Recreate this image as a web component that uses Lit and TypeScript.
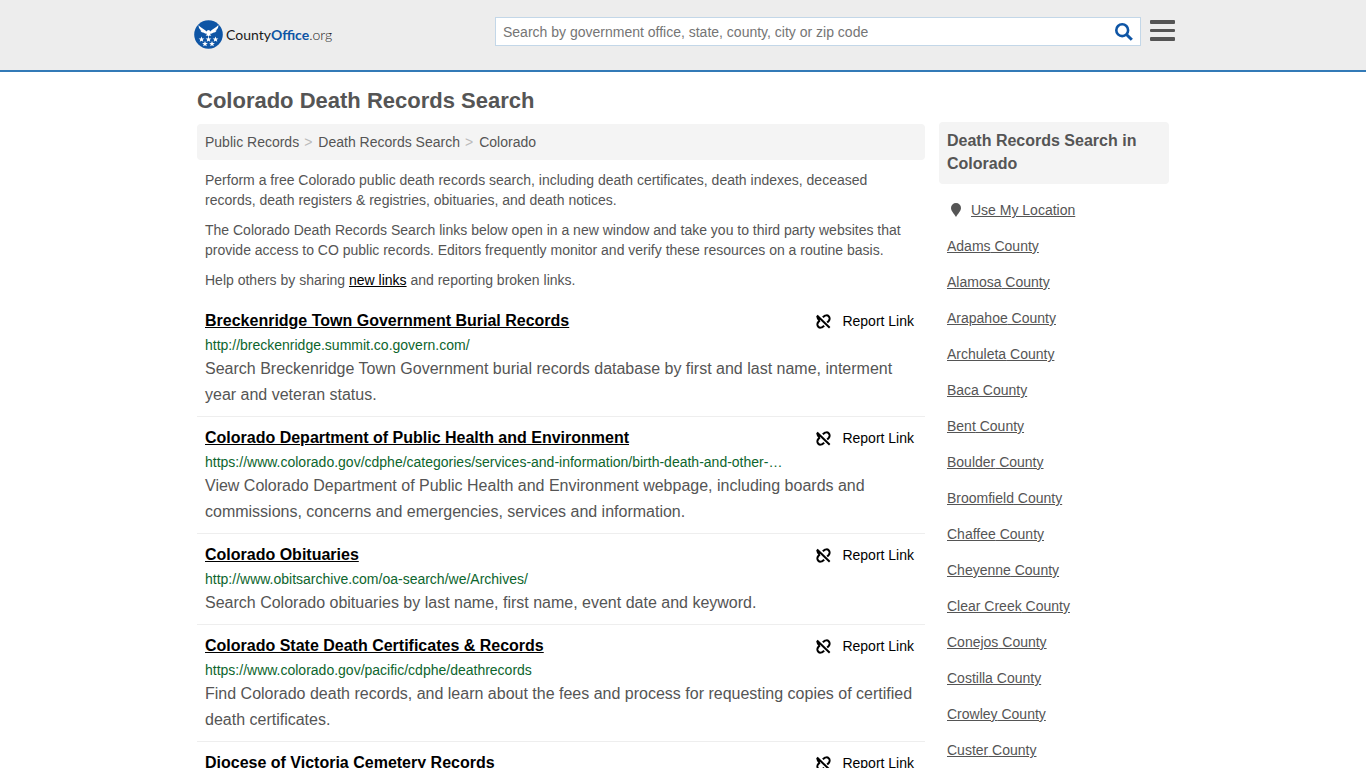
import { LitElement, html, css, svg } from "lit";
import { customElement } from "lit/decorators.js";

interface RecordLink {
  title: string;
  url?: string;
  description?: string;
}

const RECORDS: RecordLink[] = [
  {
    title: "Breckenridge Town Government Burial Records",
    url: "http://breckenridge.summit.co.govern.com/",
    description:
      "Search Breckenridge Town Government burial records database by first and last name, interment year and veteran status.",
  },
  {
    title: "Colorado Department of Public Health and Environment",
    url: "https://www.colorado.gov/cdphe/categories/services-and-information/birth-death-and-other-…",
    description:
      "View Colorado Department of Public Health and Environment webpage, including boards and commissions, concerns and emergencies, services and information.",
  },
  {
    title: "Colorado Obituaries",
    url: "http://www.obitsarchive.com/oa-search/we/Archives/",
    description: "Search Colorado obituaries by last name, first name, event date and keyword.",
  },
  {
    title: "Colorado State Death Certificates & Records",
    url: "https://www.colorado.gov/pacific/cdphe/deathrecords",
    description:
      "Find Colorado death records, and learn about the fees and process for requesting copies of certified death certificates.",
  },
  { title: "Diocese of Victoria Cemetery Records" },
];

const COUNTIES = [
  "Adams", "Alamosa", "Arapahoe", "Archuleta", "Baca", "Bent", "Boulder", "Broomfield",
  "Chaffee", "Cheyenne", "Clear Creek", "Conejos", "Costilla", "Crowley", "Custer",
];

const STARS = [[7.5, 19.3], [14.5, 19.3], [21.5, 19.3], [11, 23.8], [18, 23.8]];

@customElement("app-root")
export class AppRoot extends LitElement {
  static styles = css`
    :host {
      display: block;
      font: 14px/20px "Liberation Sans", Arial, sans-serif;
      color: #555;
      background: #fff;
    }
    * { box-sizing: border-box; }
    h1, h2, h3, p, ul { margin: 0; padding: 0; }
    ul { list-style: none; }
    a { color: inherit; }
    svg { display: block; flex: none; }
    .header {
      background: #ededed;
      border-bottom: 2px solid #337ab7;
    }
    .bar {
      max-width: 984px;
      height: 70px;
      margin: 0 auto;
      padding: 17px 0 0 3px;
      display: flex;
      align-items: flex-start;
      justify-content: space-between;
    }
    .logo {
      display: flex;
      align-items: center;
      gap: 3px;
      height: 35px;
      color: #1a1a1a;
      font: 14px/20px Lato, sans-serif;
      text-decoration: none;
    }
    .brand { color: #0e55a5; font-weight: 700; }
    .tld { font-weight: 300; }
    .tools { display: flex; gap: 9px; }
    .search {
      display: flex;
      align-items: center;
      width: 646px;
      height: 29px;
      background: #fff;
      border: 1px solid #c3d7e8;
      padding: 0 7px;
    }
    .query {
      flex: 1;
      min-width: 0;
      height: 27px;
      border: 0;
      padding: 0;
      outline: 0;
      background: none;
      font: inherit;
      color: #555;
    }
    .query::placeholder { color: #757575; opacity: 1; }
    .icon-button {
      border: 0;
      background: none;
      padding: 0;
      cursor: pointer;
      color: #555;
    }
    .search .icon-button { color: #0e55a5; }
    .page {
      max-width: 972px;
      margin: 0 auto;
      padding-top: 14px;
    }
    .title { font-size: 22px; line-height: 30px; }
    .columns {
      display: grid;
      grid-template-columns: minmax(0, 1fr) 230px;
      gap: 14px;
      align-items: start;
      padding-top: 6px;
    }
    .crumbs {
      display: flex;
      gap: 5px;
      margin-top: 2px;
      padding: 8px;
      background: #f4f4f4;
      border-radius: 4px;
    }
    .crumbs a { text-decoration: none; }
    .sep { color: #bbb; padding-right: 1px; }
    .intro {
      display: grid;
      gap: 10px;
      padding: 10px 8px;
    }
    .dark { color: #000; }
    .record {
      display: grid;
      grid-template-columns: minmax(0, 1fr) auto;
      align-items: start;
      padding: 8px;
      border-bottom: 1px solid #eee;
    }
    .record:last-child { border-bottom: 0; }
    .name { font-size: 16px; line-height: 26px; color: #000; }
    .report {
      display: flex;
      align-items: center;
      gap: 11px;
      padding-right: 3px;
      line-height: 26px;
      color: #000;
      text-decoration: none;
    }
    .url { grid-column: 1 / -1; color: #0d652d; line-height: 22px; }
    .about { grid-column: 1 / -1; font-size: 16px; line-height: 26px; }
    .side-title {
      padding: 7px 8px 9px;
      font-size: 16px;
      line-height: 23px;
      background: #f4f4f4;
      border-radius: 4px;
    }
    .places {
      display: grid;
      gap: 16px;
      padding: 16px 8px;
    }
    .here { display: flex; align-items: center; gap: 9px; padding-left: 3px; }
  `;

  private logo() {
    return svg`<svg width="29" height="29" viewBox="0 0 29 29" aria-hidden="true">
      <circle cx="14.5" cy="14.5" r="14.3" fill="#0e55a5"/>
      <path fill="#fff" d="M4.600 5c1.600 3 5.600 3.600 7.900 6.600l1.100-1.300 1.700-.3.800 1.600c2.400-3 6.200-3.600 8.300-6.600.2 2.800-1.200 4.600-3 5.500.5.100.9 0 1.300-.1-.8 1.600-2.100 2.200-3.600 2.300-.9 1-2.100 1.300-3.200 1l1.400 2.100-1.900-.2-.9 1.300-.9-1.300-1.900.2 1.400-2.100c-1.100.3-2.300 0-3.200-1-1.500-.1-2.800-.7-3.600-2.300.4.100.8.200 1.300.1C5.800 9.600 4.400 7.800 4.600 5z"/>
      ${STARS.map(
        ([x, y]) => svg`<path fill="#fff" transform="translate(${x} ${y})" d="M0-2.900.8-.9 2.900-.8 1.200.5 1.800 2.500 0 1.400-1.800 2.500-1.200.5-2.900-.8-.8-.9z"/>`
      )}
    </svg>`;
  }

  private brokenLink() {
    return svg`<svg width="15" height="15" viewBox="0 0 15 15" fill="none" stroke="#000" stroke-width="2" aria-hidden="true">
      <path d="M1 1.500l12.700 12.300"/>
      <path d="M6.800 3.300l1-.9c1.500-1.300 3.700-1.400 4.900-.1 1.300 1.300 1.200 3.400 0 4.700l-1.500 1.500"/>
      <path d="M8.200 11.700l-1 .9c-1.500 1.300-3.700 1.400-4.900.1-1.300-1.300-1.200-3.400 0-4.700l1.500-1.500"/>
      <path d="M3.800 6.500C1.900 5.200 1.300 4 1.500 2"/>
    </svg>`;
  }

  render() {
    return html`
      <header class="header">
        <div class="bar">
          <a class="logo" href="#">
            ${this.logo()}
            <span>County<span class="brand">Office</span><span class="tld">.org</span></span>
          </a>
          <div class="tools">
            <form class="search" role="search">
              <input class="query" type="text" aria-label="Search"
                placeholder="Search by government office, state, county, city or zip code" />
              <button class="icon-button" type="button" aria-label="Search">
                <svg width="18" height="18" viewBox="0 0 18 18" fill="none" stroke="currentColor">
                  <circle cx="7.200" cy="7.200" r="5.900" stroke-width="2.600" />
                  <path d="M11.500 11.500l5.300 5.300" stroke-width="3" />
                </svg>
              </button>
            </form>
            <button class="icon-button" type="button" aria-label="Menu">
              <svg width="25" height="27" viewBox="0 0 25 27" fill="currentColor">
                <rect y="2" width="25" height="4" rx="1" />
                <rect y="11" width="25" height="3" rx="1" />
                <rect y="19" width="25" height="4" rx="1" />
              </svg>
            </button>
          </div>
        </div>
      </header>
      <div class="page">
        <h1 class="title">Colorado Death Records Search</h1>
        <div class="columns">
          <main>
            <nav class="crumbs" aria-label="Breadcrumb">
              <a href="#">Public Records</a><span class="sep">&gt;</span>
              <a href="#">Death Records Search</a><span class="sep">&gt;</span>
              <a href="#">Colorado</a>
            </nav>
            <div class="intro">
              <p>Perform a free Colorado public death records search, including death certificates, death indexes, deceased records, death registers &amp; registries, obituaries, and death notices.</p>
              <p>The Colorado Death Records Search links below open in a new window and take you to third party websites that provide access to CO public records. Editors frequently monitor and verify these resources on a routine basis.</p>
              <p>Help others by sharing <a class="dark" href="#">new links</a> and reporting broken links.</p>
            </div>
            ${RECORDS.map(
              (r) => html`<article class="record">
                <h3 class="name"><a href="#">${r.title}</a></h3>
                <a class="report" href="#">${this.brokenLink()}Report Link</a>
                ${r.url ? html`<div class="url">${r.url}</div>` : null}
                ${r.description ? html`<p class="about">${r.description}</p>` : null}
              </article>`
            )}
          </main>
          <aside>
            <h2 class="side-title">Death Records Search in Colorado</h2>
            <ul class="places">
              <li class="here">
                <svg width="12" height="14" viewBox="0 0 12 14" fill="#555" aria-hidden="true">
                  <path d="M6 0a5 5 0 0 1 5 5c0 3-3 5.500-5 9C4 10.500 1 8 1 5a5 5 0 0 1 5-5z" />
                </svg>
                <a href="#">Use My Location</a>
              </li>
              ${COUNTIES.map((c) => html`<li><a href="#">${c} County</a></li>`)}
            </ul>
          </aside>
        </div>
      </div>
    `;
  }
}
